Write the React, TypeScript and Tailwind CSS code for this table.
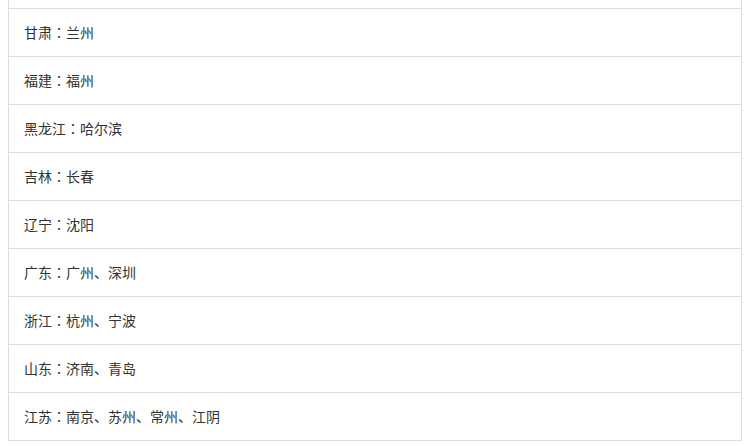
import React from "react";

const rows: [string, string][] = [
  ["甘肃", "兰州"],
  ["福建", "福州"],
  ["黑龙江", "哈尔滨"],
  ["吉林", "长春"],
  ["辽宁", "沈阳"],
  ["广东", "广州、深圳"],
  ["浙江", "杭州、宁波"],
  ["山东", "济南、青岛"],
  ["江苏", "南京、苏州、常州、江阴"],
];

export default function App() {
  return (
    <div
      className="bg-white px-2 pb-2 text-[14px] text-[#333]"
      style={{ fontFamily: '"Noto Sans CJK SC", sans-serif' }}
    >
      <div className="border-x border-[#ddd]">
        <div className="h-[9px] border-b border-[#ddd]" />
        {rows.map(([p, c]) => (
          <div
            key={p}
            className="flex h-[48px] items-center border-b border-[#ddd] pb-px pl-[15px]"
          >
            <span>{p}</span>
            <span style={{ fontFamily: '"Noto Sans CJK TC", sans-serif' }}>：</span>
            <span>{c}</span>
          </div>
        ))}
      </div>
    </div>
  );
}
